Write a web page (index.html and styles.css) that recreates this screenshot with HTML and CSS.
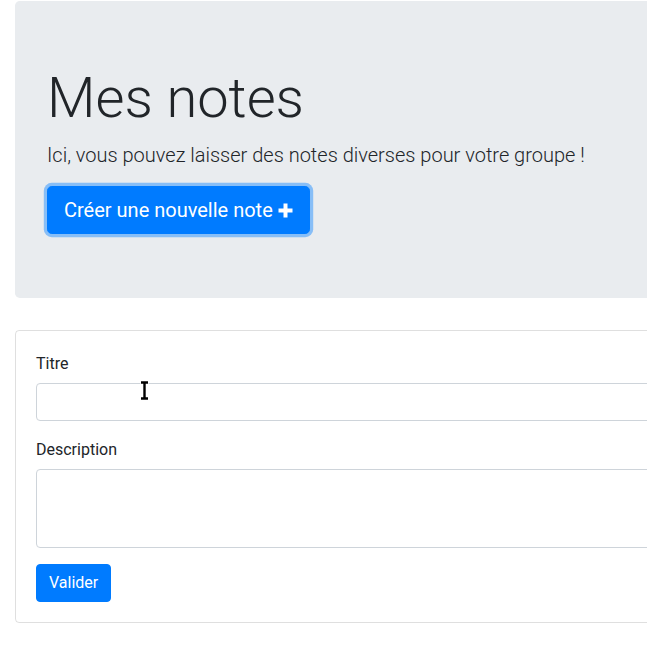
FILE: index.html
```html
<!DOCTYPE html>
<html lang="fr">
<head>
<meta charset="utf-8">
<title>Mes notes</title>
<link rel="stylesheet" href="styles.css">
</head>
<body>
<div class="container">
  <div class="jumbotron">
    <h1 class="display">Mes notes</h1>
    <p class="lead">Ici, vous pouvez laisser des notes diverses pour votre groupe !</p>
    <button class="btn btn-lg btn-focus">Créer une nouvelle note <svg class="plus" width="15" height="15" viewBox="0 0 15 15"><path fill="#fff" d="M5.5 0.5h4v5h5v4h-5v5h-4v-5h-5v-4h5z"/></svg></button>
  </div>
  <div class="card">
    <form class="card-body">
      <div class="form-group">
        <label class="label">Titre</label>
        <input class="form-control" type="text">
      </div>
      <div class="form-group">
        <label class="label">Description</label>
        <textarea class="form-control textarea"></textarea>
      </div>
      <button class="btn btn-sm-primary" type="button">Valider</button>
    </form>
  </div>
</div>
<svg class="cursor" width="9" height="19" viewBox="0 0 9 19"><path d="M0.5 1.5h8M4.5 1.5v16M0.5 17.5h8" stroke="#fff" stroke-width="4" fill="none"/><path d="M1 1.5h7M4.5 1.5v16M1 17.5h7" stroke="#000" stroke-width="2.4" fill="none"/></svg>
</body>
</html>
```
FILE: styles.css
```css
html, body {
  margin: 0;
  padding: 0;
  overflow: hidden;
  background: #fff;
}
body {
  font-family: Roboto, "Liberation Sans", sans-serif;
  font-size: 16px;
  line-height: 1.5;
  color: #212529;
  position: relative;
  min-height: 662px;
}
.container {
  width: 1140px;
  padding: 1px 15px 0 15px;
}
.jumbotron {
  background: #e9ecef;
  border-radius: 4.8px;
  padding: 64px 32px;
  margin-bottom: 32px;
}
.display {
  margin: 0 0 8px 0;
  font-size: 56px;
  font-weight: 300;
  line-height: 1.2;
}
.lead {
  margin: 0 0 16px 0;
  font-size: 20px;
  font-weight: 300;
  line-height: 1.5;
}
.btn {
  font-family: inherit;
  border: 1px solid #007bff;
  background: #007bff;
  color: #fff;
  cursor: pointer;
  display: inline-block;
}
.btn-lg {
  padding: 8px 16px;
  font-size: 20px;
  line-height: 1.5;
  border-radius: 4.8px;
  height: 48px;
}
.btn-focus {
  box-shadow: 0 0 0 3.2px rgba(38, 143, 255, 0.5);
}
.plus {
  vertical-align: -1px;
}
.card {
  border: 1px solid rgba(0, 0, 0, 0.125);
  border-radius: 4px;
}
.card-body {
  padding: 20px;
  margin: 0;
}
.form-group {
  margin-bottom: 16px;
}
.label {
  display: block;
  padding-top: 1px;
  margin-bottom: 7px;
}
.form-control {
  display: block;
  box-sizing: border-box;
  width: 100%;
  height: 38px;
  padding: 6px 12px;
  font-size: 16px;
  font-family: inherit;
  border: 1px solid #ced4da;
  border-radius: 4px;
  background: #fff;
  margin: 0;
}
.textarea {
  height: 79px;
  resize: none;
}
.btn-sm-primary {
  padding: 6px 12px;
  font-size: 16px;
  line-height: 1.5;
  border-radius: 4px;
  height: 38px;
}
.cursor {
  position: absolute;
  left: 140px;
  top: 381px;
}
```
